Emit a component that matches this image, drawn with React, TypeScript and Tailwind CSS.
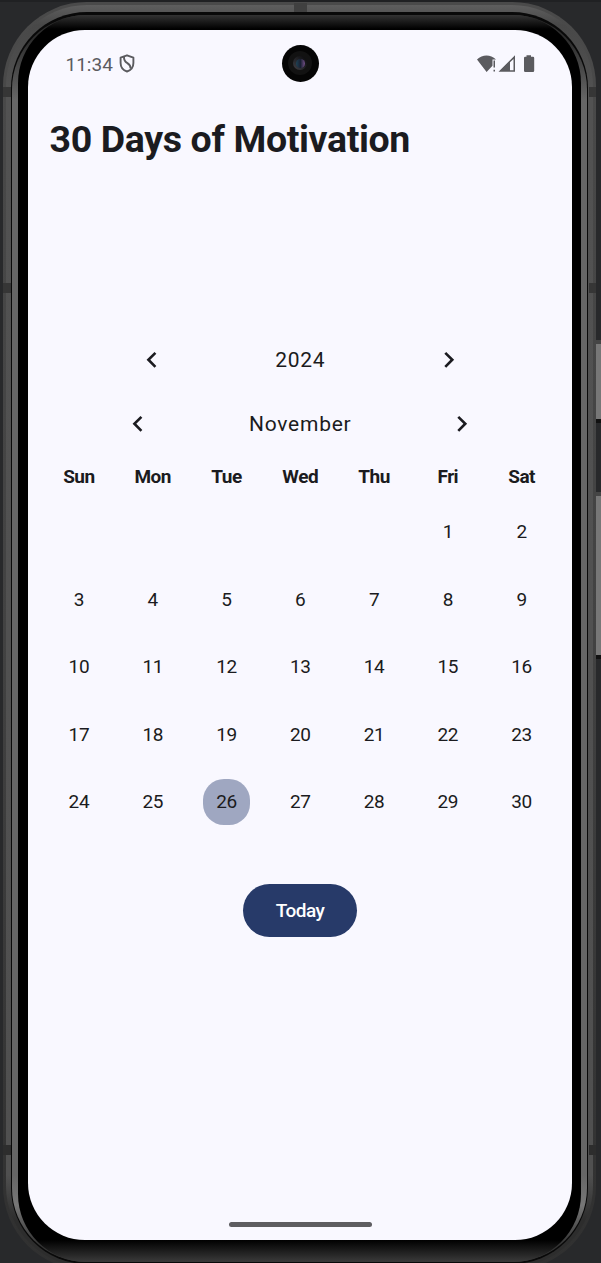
import React from "react";

const WEEKDAYS = ["Sun", "Mon", "Tue", "Wed", "Thu", "Fri", "Sat"];
const DAYS: (number | null)[] = [
  ...Array<null>(5).fill(null),
  ...Array.from({ length: 30 }, (_, i) => i + 1),
];
const SELECTED = 26;

function Chevron({ dir, label }: { dir: "left" | "right"; label: string }) {
  return (
    <button aria-label={label} className="flex h-8 w-8 items-center justify-center">
      <svg viewBox="0 0 24 24" className="h-[31.7px] w-[31.7px] shrink-0" fill="#1b1b20">
        {dir === "left" ? (
          <path d="M15.41 16.59 10.83 12l4.58-4.59L14 6l-6 6 6 6z" />
        ) : (
          <path d="M8.59 16.59 13.17 12 8.59 7.41 10 6l6 6-6 6z" />
        )}
      </svg>
    </button>
  );
}

function StatusBar() {
  return (
    <div className="flex h-[67px] items-center justify-between pr-[37px] pl-[37.500px]">
      <div className="flex items-center gap-[6.500px] text-[#5b5b5f]">
        <span className="w-[47px] pt-px text-[19px] leading-none tracking-[0px] whitespace-nowrap">11:34</span>
        <svg width="16" height="19" viewBox="0 0 16 19" fill="none" stroke="#5b5b5f" strokeWidth="1.9">
          <path d="M8 1.3 14.4 3.7V9c0 4-2.6 7.2-6.4 8.5C4.200 16.200 1.600 13 1.600 9V3.700Z" strokeLinejoin="round" />
          <path d="M5 2.800c-.2 3.400 1 5 3.400 6.300 2.200 1.300 3.300 2.800 3.200 5.500" />
        </svg>
      </div>
      <svg width="58" height="18" viewBox="0 0 58 18" fill="#5b5b5f">
        <path d="M0 4.500C5.500-.9 13.500-.9 19 4.500H15.500v6.200L9.600 17Z" />
        <path d="M16.500 5.500h1.500v7h-1.500zM16.500 14.800h1.500v1.800h-1.500z" />
        <path fillRule="evenodd" d="M21.500 16.800 38 .3v16.500ZM33 7.200v8h3.500V4Z" />
        <path d="M49.500.3h4.500v1.500h2q1.200 0 1.200 1.200v12.700q0 1.300-1.200 1.300h-7.800q-1.200 0-1.200-1.300V3q0-1.200 1.200-1.200h1.300Z" />
      </svg>
    </div>
  );
}

function Camera() {
  return (
    <div className="absolute top-[14.500px] left-[253.500px] flex h-[37px] w-[37px] items-center justify-center rounded-full bg-[#050505]">
      <div className="flex h-6 w-6 items-center justify-center rounded-full bg-[#121212]">
        <div className="flex h-[14px] w-[14px] items-center justify-center rounded-full bg-linear-to-tr from-[#414148] to-[#08080a]">
          <div className="h-[9px] w-[9px] rounded-full bg-linear-to-r from-[#1c4356] via-[#192033] to-[#76508b]" />
        </div>
      </div>
    </div>
  );
}

function Screen() {
  return (
    <main className="relative h-[1210px] w-[544px] overflow-hidden rounded-[57px] bg-[#f9f8ff] text-[#1b1b20]">
      <StatusBar />
      <Camera />
      <h1 className="mt-[18px] ml-[21.500px] text-[37.500px] leading-[49px] font-bold tracking-[-0.36px] whitespace-nowrap">30 Days of Motivation</h1>

      <section className="mt-[164px] ml-[14px] w-[516.5px]">
        <div className="mx-auto flex h-16 w-[329px] items-center justify-between">
          <Chevron dir="left" label="Previous year" />
          <span className="pt-px text-[21px] tracking-[0.75px]">2024</span>
          <Chevron dir="right" label="Next year" />
        </div>
        <div className="mx-auto flex h-16 w-[356px] items-center justify-between">
          <Chevron dir="left" label="Previous month" />
          <span className="pt-px text-[21px] tracking-[0.75px]">November</span>
          <Chevron dir="right" label="Next month" />
        </div>
        <div className="grid h-[42px] grid-cols-7 items-center text-center text-[19px] font-bold tracking-[-0.5px]">
          {WEEKDAYS.map((d) => (
            <span key={d}>{d}</span>
          ))}
        </div>
        <div className="grid grid-cols-7 text-[19px] tracking-[-0.4px]">
          {DAYS.map((d, i) => (
            <div key={i} className="flex h-[67.500px] items-center justify-center">
              {d !== null && (
                <span
                  className={
                    d === SELECTED
                      ? "flex h-[46.500px] w-[47px] items-center justify-center rounded-[21px] bg-[#9fa7c1] pt-px"
                      : "flex h-[46.500px] w-[47px] items-center justify-center pt-px"
                  }
                >
                  {d}
                </span>
              )}
            </div>
          ))}
        </div>
      </section>

      <button className="mx-auto mt-[48px] flex h-[53px] w-[113.500px] items-center justify-center rounded-full bg-[#273a69] pt-[2px] text-[19px] font-medium tracking-[-0.5px] text-white">
        Today
      </button>
      <div className="absolute bottom-[13px] left-[200.500px] h-[5px] w-[143px] rounded-full bg-[#5e5d61]" />
    </main>
  );
}

export default function App() {
  return (
    <div className="relative h-[1263px] w-[601px] overflow-hidden border-t-2 border-[#202123] bg-[#28292b] font-[Roboto,sans-serif]">
      <div className="absolute top-[338px] right-0 h-[83px] w-[5px] border-t-4 border-b-4 border-t-[#454545] border-b-[#111] bg-[#777]" />
      <div className="absolute top-[490px] right-0 h-[167px] w-[5px] border-t-4 border-b-4 border-t-[#454545] border-b-[#111] bg-[#777]" />
      {/* Phone shell: metal band, seam, polished rim, bezel */}
      <div className="relative ml-[3px] h-[1268px] w-[593px] rounded-[84px] bg-linear-to-b from-[#4a4a4a] via-[#424242] to-[#303030] px-[3px] pt-[3px] pb-[3px]">
        <div className="h-full rounded-[81px] bg-[linear-gradient(to_bottom,#5e5e5e_0,#484848_20px,#525252_90px,#505050_1170px,#2d2d2d_1215px)] px-[5px] pt-[7px] pb-[3px]">
          <div className="h-full rounded-[76px] bg-[#090909] px-px pt-[3px] pb-[2px]">
            <div className="h-full rounded-[74px] bg-[linear-gradient(to_bottom,#2a2a2a_0,#2d2d2d_25px,#666_85px,#666_1160px,#777_1190px,#333_1230px)] px-[6px]">
              <div className="h-full rounded-[68px] bg-[linear-gradient(to_bottom,#333_0,#000_14px,#000_1225px,#383838_1246px)] px-[10px] pt-[15px]">
                <Screen />
              </div>
            </div>
          </div>
        </div>
        <div className="absolute top-[85px] left-0 h-[10px] w-[8px] bg-[#363636]" />
        <div className="absolute top-[85px] right-0 h-[10px] w-[7px] bg-[#363636]" />
        <div className="absolute top-[281px] left-0 h-[10px] w-[8px] bg-[#363636]" />
        <div className="absolute top-[281px] right-0 h-[10px] w-[7px] bg-[#363636]" />
        <div className="absolute top-[1143px] left-0 h-[10px] w-[8px] bg-[#2d2d2d]" />
        <div className="absolute top-[1143px] right-0 h-[10px] w-[7px] bg-[#2d2d2d]" />
        <div className="absolute top-px left-[291px] h-[9px] w-[13px] bg-[#404040]" />
      </div>
    </div>
  );
}
